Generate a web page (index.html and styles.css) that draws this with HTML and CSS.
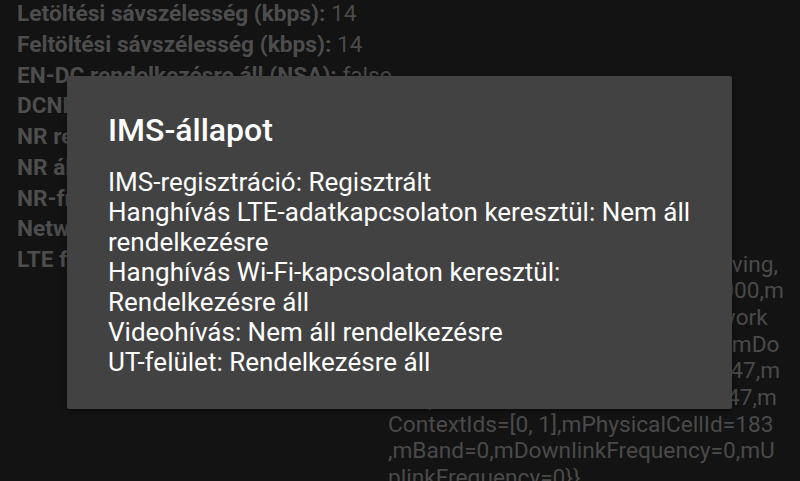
FILE: index.html
```html
<!DOCTYPE html>
<html lang="hu">
<head>
  <meta charset="UTF-8" />
  <title>IMS-állapot</title>
  <link rel="stylesheet" href="styles.css">
</head>
<body>
  <!-- Phone info list behind the dialog -->
  <div class="info-list">
    <div class="info-row"><span class="label">Letöltési sávszélesség (kbps):</span> 14</div>
    <div class="info-row"><span class="label">Feltöltési sávszélesség (kbps):</span> 14</div>
    <div class="info-row"><span class="label">EN-DC rendelkezésre áll (NSA):</span> false</div>
    <div class="info-row"><span class="label">DCNR korlátozva (NSA):</span> false</div>
    <div class="info-row"><span class="label">NR rendelkezésre áll (NSA):</span> false</div>
    <div class="info-row"><span class="label">NR állapot (NSA):</span> NONE</div>
    <div class="info-row"><span class="label">NR-frekvencia:</span> UNKNOWN</div>
    <div class="info-row"><span class="label">Network Slicing Config:</span></div>
    <div class="info-row split">
      <span class="label split-label">LTE fizikai csatorna konfig.:</span>
      <div class="split-value">
        <div>e{mConnectionStatus=PrimaryServing,</div>
        <div>mCellBandwidthDownlinkKhz=20000,m</div>
        <div>CellBandwidthUplinkKhz=0,mNetwork</div>
        <div>Type=LTE,mFrequencyRange=100,mDo</div>
        <div>wnlinkChannelNumber=2147483647,m</div>
        <div>,mUplinkChannelNumber=20001347,m</div>
        <div>ContextIds=[0, 1],mPhysicalCellId=183</div>
        <div>,mBand=0,mDownlinkFrequency=0,mU</div>
        <div>plinkFrequency=0}}</div>
      </div>
    </div>
  </div>

  <!-- IMS status dialog -->
  <div class="dialog">
    <h2 class="dialog-title">IMS-állapot</h2>
    <div class="dialog-message">
      <div>IMS-regisztráció: Regisztrált</div>
      <div>Hanghívás LTE-adatkapcsolaton keresztül: Nem áll rendelkezésre</div>
      <div>Hanghívás Wi-Fi-kapcsolaton keresztül: Rendelkezésre áll</div>
      <div>Videohívás: Nem áll rendelkezésre</div>
      <div>UT-felület: Rendelkezésre áll</div>
    </div>
  </div>
</body>
</html>
```

FILE: styles.css
```css
/* Page */
body {
  margin: 0;
  height: 481px;
  overflow: hidden;
  background-color: #131313;
  font-family: Roboto, "Noto Sans", sans-serif;
  position: relative;
}

/* Dimmed info list */
.info-list {
  padding: 0 0 0 17px;
  margin-top: -1px;
  color: #4a4a4a;
  font-size: 22.7px;
}

.info-row {
  line-height: 30.75px;
  white-space: nowrap;
}

.label {
  font-weight: bold;
  color: #4d4d4d;
}

.info-row.split {
  display: flex;
}
.split-label {
  width: 371px;
  overflow: hidden;
  flex-shrink: 0;
}
.split-value {
  padding-top: 6.5px;
  line-height: 26.7px;
}

/* Dialog */
.dialog {
  position: absolute;
  left: 67px;
  top: 76px;
  width: 665px;
  height: 333px;
  box-sizing: border-box;
  padding: 35px 41px 0 41px;
  background-color: #424242;
  border-radius: 2px;
  box-shadow: 0 2px 6px rgba(0,0,0,0.4);
  color: #fff;
}

.dialog-title {
  margin: 0;
  font-size: 32px;
  font-weight: 500;
  line-height: 38px;
}

.dialog-message {
  margin-top: 18px;
  font-size: 26px;
  line-height: 30px;
}
```
